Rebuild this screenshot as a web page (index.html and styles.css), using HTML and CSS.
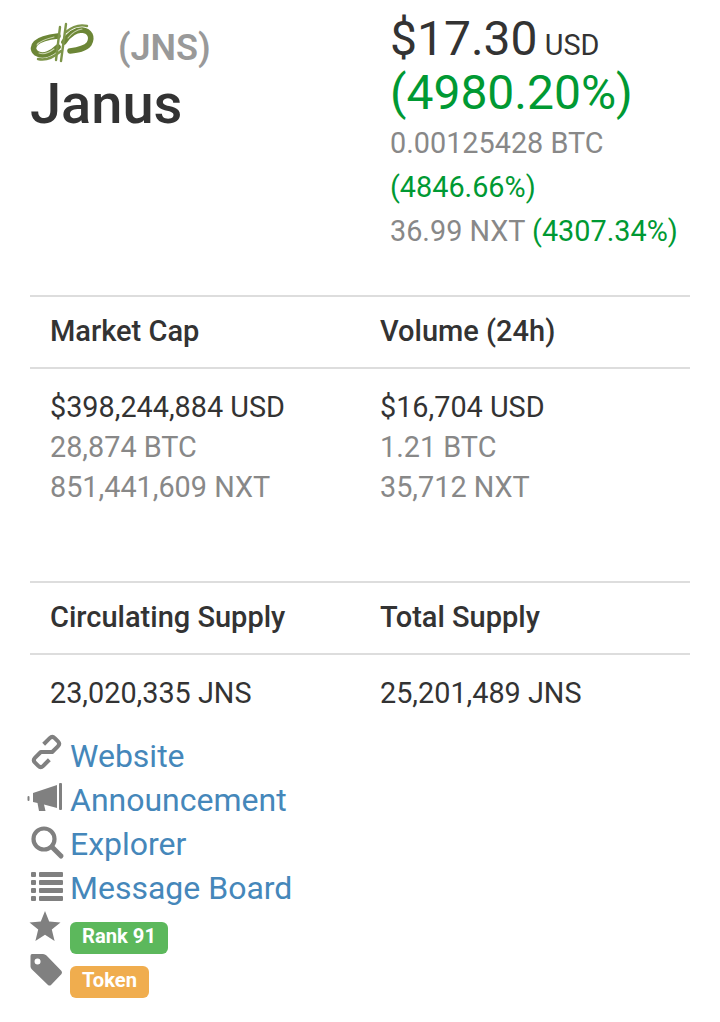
FILE: index.html
```html
<!DOCTYPE html>
<html lang="en">
<head>
<meta charset="utf-8">
<title>Janus</title>
<link rel="stylesheet" href="styles.css">
</head>
<body>
<header class="head">
  <div class="title-col">
    <div class="logo-row">
      <svg class="logo" viewBox="6 6 66 46" aria-hidden="true">
        <g fill="none" stroke-linecap="round">
          <g stroke="#6c8636" stroke-width="5.6">
            <path d="M34 22 C25 23 16 25 12 29 C8 33 9 38 14 40 C20 43 28 39 34 33"/>
            <path d="M40 28 C44 22 50 16 58 16 C66 17 69 23 65 30 C61 35 54 36 46 37"/>
          </g>
          <g stroke="#c9d3ad" stroke-width="1.1">
            <path d="M30 23 C22 25 15 27 13 31"/>
            <path d="M44 24 C48 19 52 16 58 15"/>
            <path d="M15 39 C20 41 26 38 30 35"/>
          </g>
          <g stroke="#7d9549" stroke-width="2.4">
            <path d="M14 45 C22 47 30 43 37 37"/>
            <path d="M42 18 C48 13 55 10 63 12"/>
            <path d="M42 10 L37 47"/>
            <path d="M36 13 L32 46"/>
          </g>
        </g>
      </svg>
      <span class="symbol">(JNS)</span>
    </div>
    <h1 class="name">Janus</h1>
  </div>
  <div class="price-col">
    <div class="price"><span class="price-main">$17.30</span> <span class="unit">USD</span></div>
    <div class="price-change up">(4980.20%)</div>
    <div class="sub muted">0.00125428 BTC</div>
    <div class="sub up">(4846.66%)</div>
    <div class="sub muted">36.99 NXT <span class="up">(4307.34%)</span></div>
  </div>
</header>

<section class="stats first">
  <div class="stat-head"><div>Market Cap</div><div>Volume (24h)</div></div>
  <div class="stat-body">
    <div><div>$398,244,884 USD</div><div class="muted">28,874 BTC</div><div class="muted">851,441,609 NXT</div></div>
    <div><div>$16,704 USD</div><div class="muted">1.21 BTC</div><div class="muted">35,712 NXT</div></div>
  </div>
</section>

<section class="stats second">
  <div class="stat-head"><div>Circulating Supply</div><div>Total Supply</div></div>
  <div class="stat-body">
    <div>23,020,335 JNS</div>
    <div>25,201,489 JNS</div>
  </div>
</section>

<ul class="links">
  <li>
    <svg class="ico" viewBox="0 0 34 34" aria-hidden="true"><g transform="translate(16.5 15) rotate(-45) scale(1.15)" fill="none" stroke="#808080" stroke-width="3.5" stroke-linejoin="round"><path d="M3 -6.5 H10.5 Q13.6 -6.5 13.6 -3.5 V0.5 Q13.6 3.5 10.5 3.5 H3.5 L-3.5 -3.5 H-10.5 Q-13.6 -3.5 -13.6 -0.5 V3.5 Q-13.6 6.5 -10.5 6.5 H-3"/></g></svg>
    <a href="#">Website</a>
  </li>
  <li>
    <svg class="ico" viewBox="0 0 34 34" aria-hidden="true"><g fill="#808080"><rect x="-2.5" y="15" width="2" height="5" rx="1"/><path d="M3 12 L27 4 V27 L14 23.5 L15.5 30 H9 L7.5 22 L3 21 Z"/><rect x="29" y="2" width="3" height="27" rx="1"/></g></svg>
    <a href="#">Announcement</a>
  </li>
  <li>
    <svg class="ico" viewBox="0 0 34 34" aria-hidden="true"><circle cx="14" cy="14" r="10.5" fill="none" stroke="#808080" stroke-width="4.2"/><path d="M22 22 L31 31" stroke="#808080" stroke-width="5" stroke-linecap="round"/></svg>
    <a href="#">Explorer</a>
  </li>
  <li>
    <svg class="ico" viewBox="0 0 34 34" aria-hidden="true"><g fill="#808080"><rect x="1" y="3" width="5" height="5" rx="1"/><rect x="9" y="3" width="24" height="5" rx="1"/><rect x="1" y="11" width="5" height="5" rx="1"/><rect x="9" y="11" width="24" height="5" rx="1"/><rect x="1" y="19" width="5" height="5" rx="1"/><rect x="9" y="19" width="24" height="5" rx="1"/><rect x="1" y="27" width="5" height="5" rx="1"/><rect x="9" y="27" width="24" height="5" rx="1"/></g></svg>
    <a href="#">Message Board</a>
  </li>
  <li class="badge-row">
    <svg class="ico" viewBox="0 0 34 34" aria-hidden="true"><path fill="#808080" d="M15 1 L19.2 11.6 L30.5 12.4 L21.8 19.6 L24.6 31 L15 24.8 L5.4 31 L8.2 19.6 L-0.5 12.4 L10.8 11.6 Z"/></svg>
    <span class="badge green">Rank 91</span>
  </li>
  <li class="badge-row">
    <svg class="ico" viewBox="0 0 34 34" aria-hidden="true"><path fill="#808080" fill-rule="evenodd" d="M2 0 H13 Q15 0 16.5 1.5 L31.5 17 Q32.5 18.5 31.5 20 L21 31 Q19.5 32 18 31 L2 15.5 Q0.5 14 0.5 12.5 V2 Q0.5 0 2 0 Z M7.5 4.5 A3 3 0 1 0 7.6 10.5 A3 3 0 1 0 7.5 4.5 Z"/></svg>
    <span class="badge orange">Token</span>
  </li>
</ul>
</body>
</html>
```

FILE: styles.css
```css
* { box-sizing: border-box; }
html, body { margin: 0; padding: 0; }
body {
  width: 720px;
  height: 1022px;
  padding: 0 30px;
  background: #fff;
  color: #333;
  font-family: Roboto, "Liberation Sans", sans-serif;
  font-size: 28.8px;
  line-height: 40px;
  overflow: hidden;
}
.head { display: flex; height: 295px; padding-top: 14px; }
.title-col { width: 360px; }
.logo-row { display: flex; align-items: center; height: 59px; }
.logo { width: 66px; height: 46px; align-self: flex-start; margin-top: 6px; }
.symbol { margin-left: 22px; margin-top: 9px; font-size: 36px; font-weight: 600; color: #999; line-height: 40px; }
.name { margin: 0; font-size: 56px; line-height: 62px; font-weight: 500; color: #333; }
.price-col { width: 300px; }
.price { height: 50px; line-height: 50px; }
.price-main { font-size: 48px; }
.price-change { font-size: 48px; line-height: 57px; }
.sub { line-height: 44px; }
.muted { color: #888; }
.up { color: #093; }
.stats { border-top: 2px solid #ddd; }
.first { height: 286px; }
.second { height: 153px; }
.stat-head, .stat-body { display: grid; grid-template-columns: 330px 330px; padding-left: 20px; }
.stat-head { height: 72px; padding-bottom: 2px; align-items: center; font-size: 29px; font-weight: 500; border-bottom: 2px solid #ddd; color: #333; }
.stat-body { padding-top: 18px; }
.links { list-style: none; margin: 0; padding: 0; }
.links li { display: flex; align-items: center; height: 44px; gap: 6px; }
.links a { color: #4587ba; font-size: 32px; text-decoration: none; }
.ico { width: 34px; height: 34px; flex: none; overflow: visible; margin-top: -5px; }
.badge-row { align-items: flex-start !important; }
.badge-row .ico { margin-top: 0; }
.badge {
  display: inline-block;
  margin-top: 12px;
  padding: 0 12px;
  height: 32px;
  border-radius: 6px;
  color: #fff;
  font-size: 20.2px;
  font-weight: 700;
  line-height: 28px;
}
.green { background: #5cb85c; }
.orange { background: #f0ad4e; }
```
